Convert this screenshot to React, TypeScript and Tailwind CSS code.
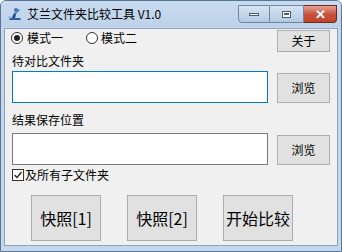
import React from 'react';

const cjk = { fontFamily: '"SimSun", "Noto Sans CJK SC", "Liberation Sans", sans-serif' };

const WinButton: React.FC<{ className?: string; children: React.ReactNode }> = ({ className, children }) => (
  <div
    className={`flex items-center justify-center bg-[#e1e1e1] border border-[#adadad] text-[12px] text-black ${className ?? ''}`}
  >
    {children}
  </div>
);

const AppIcon = () => (
  <svg width="16" height="16" viewBox="0 0 16 16">
    <path d="M2 14 L14 14 L13 12 L3 12 Z" fill="#2b5fa8" />
    <path d="M5 12 L7 7 L9 8 L8 12 Z" fill="#1c3f78" />
    <circle cx="9" cy="4" r="2" fill="#3a76c4" />
    <path d="M7 7 L12 3 L13 4 L9 8 Z" fill="#4a86d4" />
    <path d="M1 11 L6 11" stroke="#7aa6dc" strokeWidth="1" />
  </svg>
);

export default function App() {
  return (
    <div className="w-[342px] h-[252px] flex flex-col bg-[#c4d7ec] border border-[#5a7696] rounded-t-[6px] overflow-hidden">
      {/* title bar */}
      <div className="h-[26px] flex items-start bg-gradient-to-b from-[#c9dbef] to-[#bcd1e9]">
        <div className="ml-[6px] mt-[5px]">
          <AppIcon />
        </div>
        <span className="ml-[4px] mt-[6px] text-[12px] leading-[14px] text-black" style={cjk}>
          艾兰文件夹比较工具 V1.0
        </span>
        <div className="ml-auto mr-[4px] mt-[4px] flex">
          <div className="w-[32px] h-[18px] rounded-bl-[4px] border border-[#6f86a3] bg-gradient-to-b from-[#d6e4f3] to-[#b3c9e3] flex items-center justify-center">
            <div className="w-[10px] h-[3px] bg-white border border-[#4d5f78]" />
          </div>
          <div className="w-[34px] h-[18px] border-y border-r border-[#6f86a3] bg-gradient-to-b from-[#d6e4f3] to-[#b3c9e3] flex items-center justify-center">
            <div className="w-[9px] h-[7px] border border-[#4d5f78] bg-white flex items-center justify-center">
              <div className="w-[5px] h-[2px] border border-[#4d5f78]" />
            </div>
          </div>
          <div className="w-[33px] h-[18px] rounded-br-[4px] border-y border-r border-[#6b2b22] bg-gradient-to-b from-[#e7a397] via-[#c9533e] to-[#c2422a] flex items-center justify-center">
            <span className="text-white text-[13px] font-bold leading-none" style={{ fontFamily: '"Liberation Sans", sans-serif' }}>
              ✕
            </span>
          </div>
        </div>
      </div>

      {/* client area */}
      <div className="flex-1 mx-[3px] mb-[5px] mt-[1px] bg-[#f0f0f0] border border-[#8ea3bb] flex flex-col text-black" style={cjk}>
        <div className="flex items-start pl-[6px] pr-[7px] h-[24px]">
          <div className="flex items-center mt-[3px] h-[12px]">
            <div className="w-[12px] h-[12px] rounded-full border border-[#333] bg-white flex items-center justify-center">
              <div className="w-[6px] h-[6px] rounded-full bg-[#222]" />
            </div>
            <span className="ml-[4px] text-[12px] leading-[12px]">模式一</span>
          </div>
          <div className="flex items-center mt-[3px] h-[12px] ml-[23px]">
            <div className="w-[12px] h-[12px] rounded-full border border-[#333] bg-white" />
            <span className="ml-[3px] text-[12px] leading-[12px]">模式二</span>
          </div>
          <WinButton className="ml-auto mt-[1px] w-[53px] h-[22px]">关于</WinButton>
        </div>

        <div className="pl-[7px] text-[12px] leading-[14px] mt-[1px]">待对比文件夹</div>
        <div className="flex items-start pl-[7px] pr-[7px] mt-[3px]">
          <div className="w-[256px] h-[32px] bg-white border border-[#0078d7]" />
          <WinButton className="ml-auto mt-[2px] w-[53px] h-[30px]">浏览</WinButton>
        </div>

        <div className="pl-[7px] text-[12px] leading-[14px] mt-[10px]">结果保存位置</div>
        <div className="flex items-start pl-[7px] pr-[7px] mt-[6px]">
          <div className="w-[256px] h-[32px] bg-white border border-[#7a7a7a]" />
          <WinButton className="ml-auto mt-[2px] w-[53px] h-[30px]">浏览</WinButton>
        </div>

        <div className="flex items-center pl-[7px] mt-[3px] h-[14px]">
          <div className="w-[12px] h-[12px] border border-[#333] bg-white flex items-center justify-center">
            <svg width="10" height="10" viewBox="0 0 10 10">
              <path d="M1.5 5 L4 7.5 L8.5 2" stroke="#222" strokeWidth="1.3" fill="none" />
            </svg>
          </div>
          <span className="ml-[1px] text-[12px] leading-[12px]">及所有子文件夹</span>
        </div>

        <div className="flex pl-[26px] mt-[13px] gap-[26px]">
          <WinButton className="w-[70px] h-[46px] !text-[16px]">快照[1]</WinButton>
          <WinButton className="w-[70px] h-[46px] !text-[16px]">快照[2]</WinButton>
          <WinButton className="w-[70px] h-[46px] !text-[16px]">开始比较</WinButton>
        </div>
      </div>
    </div>
  );
}
